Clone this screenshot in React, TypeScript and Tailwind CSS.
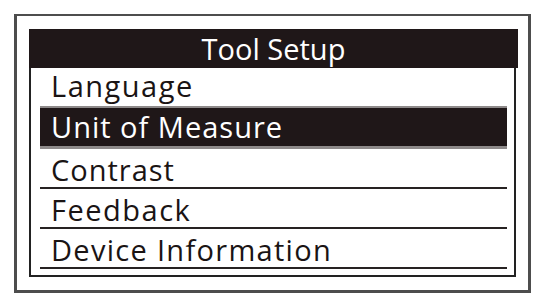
const items = [
  { label: 'Language', selected: false, line: false, track: 'tracking-[1.5px]' },
  { label: 'Unit of Measure', selected: true, line: false, track: 'tracking-[1px]' },
  { label: 'Contrast', selected: false, line: true, track: 'tracking-[1px]' },
  { label: 'Feedback', selected: false, line: true, track: 'tracking-[1.5px]' },
  { label: 'Device Information', selected: false, line: true, track: 'tracking-[1.3px]' },
]

export default function App() {
  return (
    <div className="w-[553px] h-[305px] bg-white pl-[14px] pt-[14px] font-['Open_Sans',sans-serif]">
      {/* outer frame */}
      <div className="w-[517px] h-[279px] border-l-[3px] border-t-2 border-r-[3px] border-b-[3px] border-[#4d4d4d] pl-[12px] pt-[13px]">
        {/* inner frame */}
        <div className="w-[489px] h-[248px] flex flex-col">
          <div className="h-[39px] bg-[#1f1718] text-white text-[29px] leading-[39px] text-center">
            Tool Setup
          </div>
          <div className="flex-1 w-[487px] border-l-2 border-r-2 border-b-2 border-[#222] pl-[9px] pr-[7px] flex flex-col">
            {items.map((it) =>
              it.selected ? (
                <div
                  key={it.label}
                  className="h-[43px] border-t-2 border-b-[3px] border-[#8e8a8a] bg-[#1f1718] text-white text-[29px] leading-[37px] pl-[11px]"
                >
                  <span className={it.track}>{it.label}</span>
                </div>
              ) : (
                <div
                  key={it.label}
                  className={`${it.line ? 'h-[40px] border-b-2 border-[#262222] leading-[41px]' : 'h-[38px] leading-[36px]'} text-[#1a1414] text-[29px] pl-[11px]`}
                >
                  <span className={it.track}>{it.label}</span>
                </div>
              )
            )}
          </div>
        </div>
      </div>
    </div>
  )
}
